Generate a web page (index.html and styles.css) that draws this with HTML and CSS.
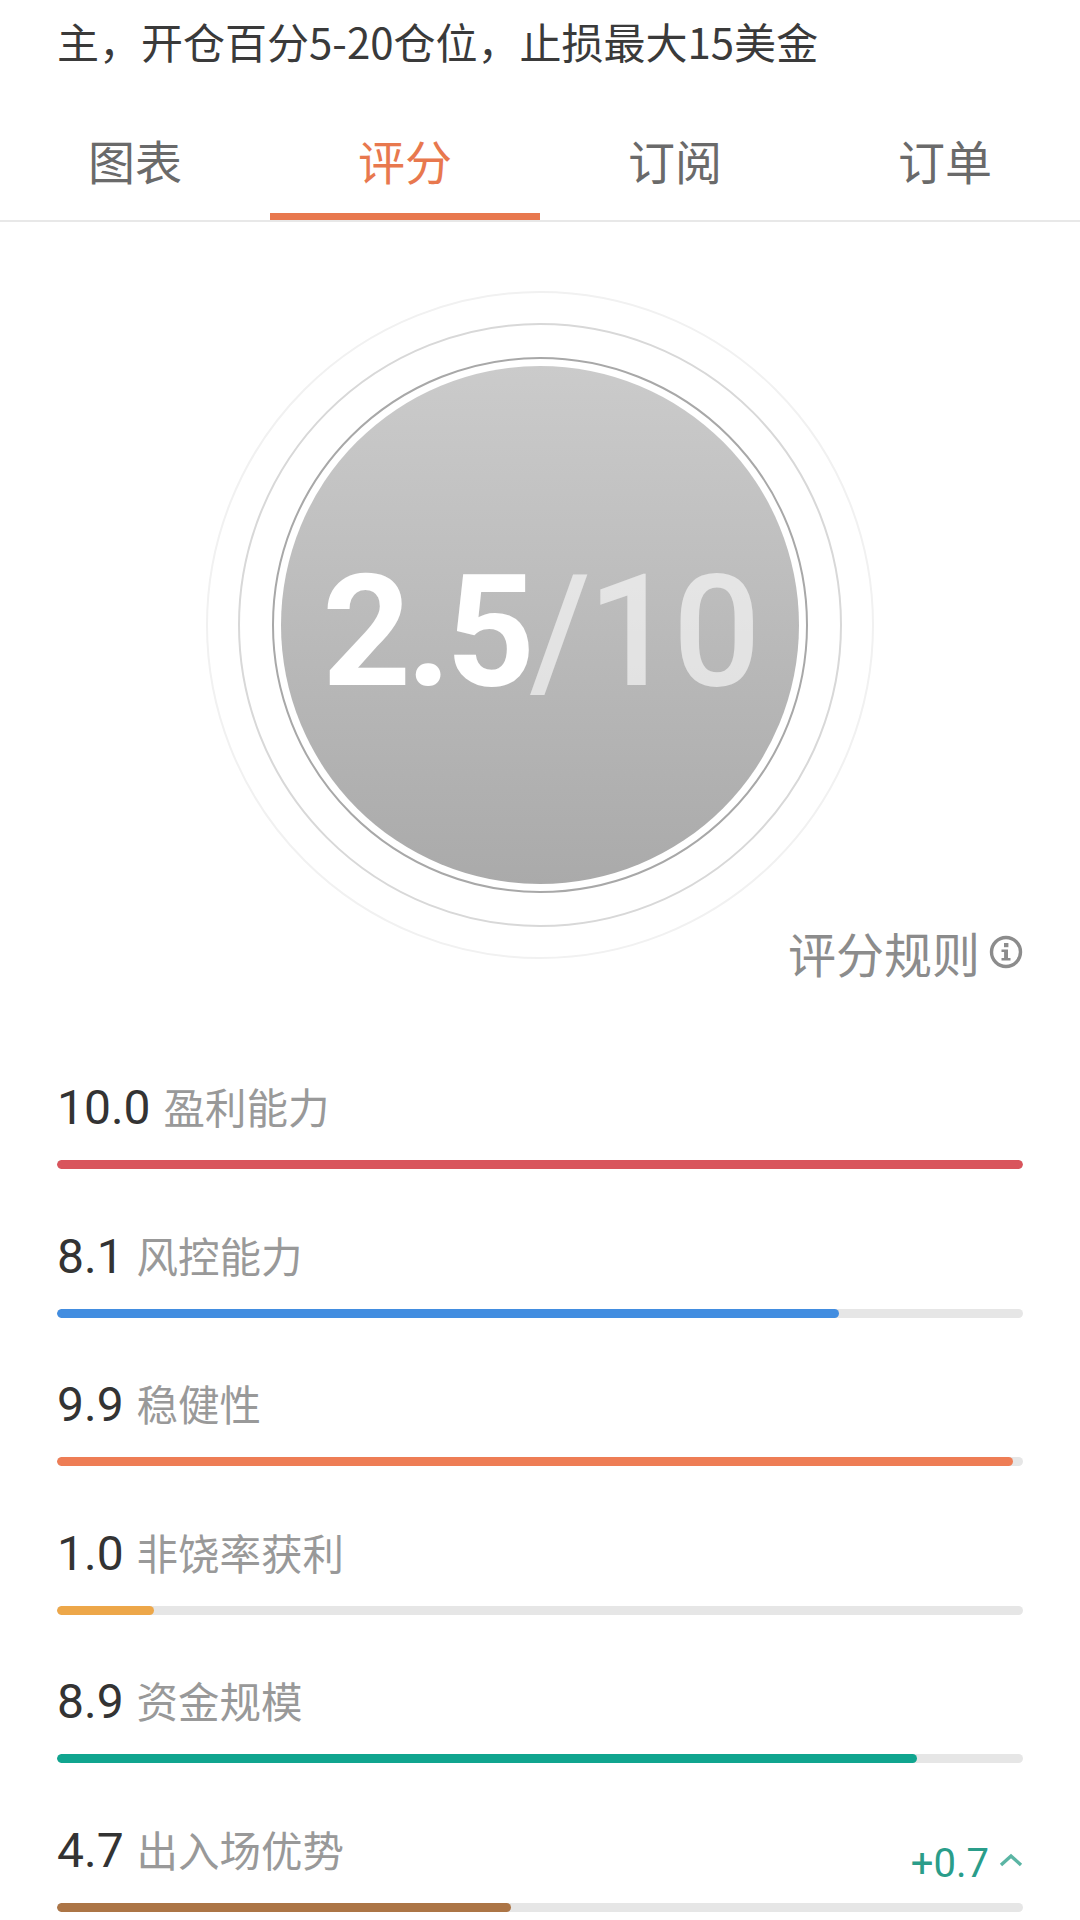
FILE: index.html

```html
<!DOCTYPE html>
<html lang="zh-CN">
<head>
  <meta charset="UTF-8" />
  <meta name="viewport" content="width=device-width, initial-scale=1.0" />
  <title>评分</title>
  <link rel="stylesheet" href="styles.css">
</head>
<body>
  <p class="intro">主，开仓百分5-20仓位，止损最大15美金</p>

  <div class="tabs">
    <div class="tab">图表</div>
    <div class="tab active">评分</div>
    <div class="tab">订阅</div>
    <div class="tab">订单</div>
  </div>

  <div class="gauge">
    <div class="ring ring-outer">
      <div class="ring ring-mid">
        <div class="ring ring-inner">
          <div class="disc">
            <span class="score">2.5</span><span class="score-max">/10</span>
          </div>
        </div>
      </div>
    </div>
    <div class="rule-link">
      评分规则
      <svg class="info-icon" viewBox="0 0 34 34">
        <circle cx="17" cy="17" r="14.5" fill="none" stroke="#8c8c8c" stroke-width="3.4"/>
        <rect x="15" y="8" width="4.4" height="4.2" fill="#8c8c8c"/>
        <path d="M12.5 14.5h6.5v8.5h2.5v2.6h-9v-2.6h2.6v-5.9h-2.6z" fill="#8c8c8c"/>
      </svg>
    </div>
  </div>

  <div class="metrics">
    <div class="metric">
      <div class="metric-head"><span class="num">10.0</span><span class="name">盈利能力</span></div>
      <div class="track"><div class="fill red" style="width: 100%"></div></div>
    </div>
    <div class="metric">
      <div class="metric-head"><span class="num">8.1</span><span class="name">风控能力</span></div>
      <div class="track"><div class="fill blue" style="width: 81%"></div></div>
    </div>
    <div class="metric">
      <div class="metric-head"><span class="num">9.9</span><span class="name">稳健性</span></div>
      <div class="track"><div class="fill orange" style="width: 99%"></div></div>
    </div>
    <div class="metric">
      <div class="metric-head"><span class="num">1.0</span><span class="name">非饶率获利</span></div>
      <div class="track"><div class="fill yellow" style="width: 10%"></div></div>
    </div>
    <div class="metric">
      <div class="metric-head"><span class="num">8.9</span><span class="name">资金规模</span></div>
      <div class="track"><div class="fill green" style="width: 89%"></div></div>
    </div>
    <div class="metric">
      <div class="metric-head">
        <span class="num">4.7</span><span class="name">出入场优势</span>
        <span class="delta">+0.7
          <svg class="chevron" viewBox="0 0 24 14"><path d="M2 12L12 3l10 9" fill="none" stroke="#5bb5a4" stroke-width="3.4"/></svg>
        </span>
      </div>
      <div class="track"><div class="fill brown" style="width: 47%"></div></div>
    </div>
  </div>
</body>
</html>
```

FILE: styles.css

```css
* { box-sizing: border-box; }
html, body { height: 100%; }
body { margin: 0; background: #fff; overflow: hidden; font-family: "Noto Sans CJK SC", "Noto Sans", sans-serif; color: #333; }

.intro { margin: 0; padding: 12px 57px 0; height: 110px; font-size: 42px; line-height: 58px; color: #3a3a3a; }

.tabs { display: flex; height: 112px; border-bottom: 2px solid #e8e8e8; }
.tab { flex: 1; text-align: center; font-size: 47px; line-height: 99px; color: #6a6a6a; }
.tab.active { color: #e8784e; border-bottom: 7px solid #e8784e; height: 110px; }

.gauge { position: relative; display: flex; justify-content: center; padding-top: 69px; height: 760px; }
.ring { display: flex; align-items: center; justify-content: center; border-radius: 50%; border-style: solid; }
.ring-outer { width: 668px; height: 668px; border-width: 2px; border-color: #f1f1f1; }
.ring-mid { width: 604px; height: 604px; border-width: 2px; border-color: #d8d8d8; }
.ring-inner { width: 536px; height: 536px; border-width: 2px; border-color: #a8a8a8; }
.disc { display: flex; align-items: center; justify-content: center; width: 518px; height: 518px; padding-top: 14px; border-radius: 50%; background: linear-gradient(180deg, #cbcbcb, #aaaaaa); font-family: Roboto, sans-serif; font-size: 155px; line-height: 1; }
.score { color: #fff; font-weight: 700; letter-spacing: -5px; }
.score-max { color: rgba(255, 255, 255, 0.6); font-weight: 500; letter-spacing: -3px; }

.rule-link { position: absolute; right: 57px; top: 698px; display: flex; align-items: center; gap: 9px; font-size: 48px; line-height: 64px; color: #8c8c8c; }
.info-icon { width: 34px; height: 34px; }

.metrics { display: flex; flex-direction: column; padding: 0 57px; margin-top: 54px; }
.metric { height: 148.6px; padding-top: 40px; }
.metric-head { display: flex; align-items: baseline; height: 84px; }
.num { font-family: Roboto, sans-serif; font-size: 48px; line-height: 60px; color: #333; margin-right: 13px; }
.name { font-size: 41.5px; line-height: 60px; color: #999; }
.delta { display: flex; align-items: center; gap: 10px; margin-left: auto; font-family: Roboto, sans-serif; font-size: 40px; line-height: 44px; color: #2a9d8a; position: relative; top: 10px; }
.chevron { width: 24px; height: 14px; margin-bottom: 8px; }

.track { height: 9px; border-radius: 5px; background: #e6e6e6; overflow: hidden; }
.fill { height: 100%; border-radius: 5px; }
.red { background: #d9545c; }
.blue { background: #428de0; }
.orange { background: #ee7d55; }
.yellow { background: #eda749; }
.green { background: #10a58f; }
.brown { background: #ac7546; }
```
